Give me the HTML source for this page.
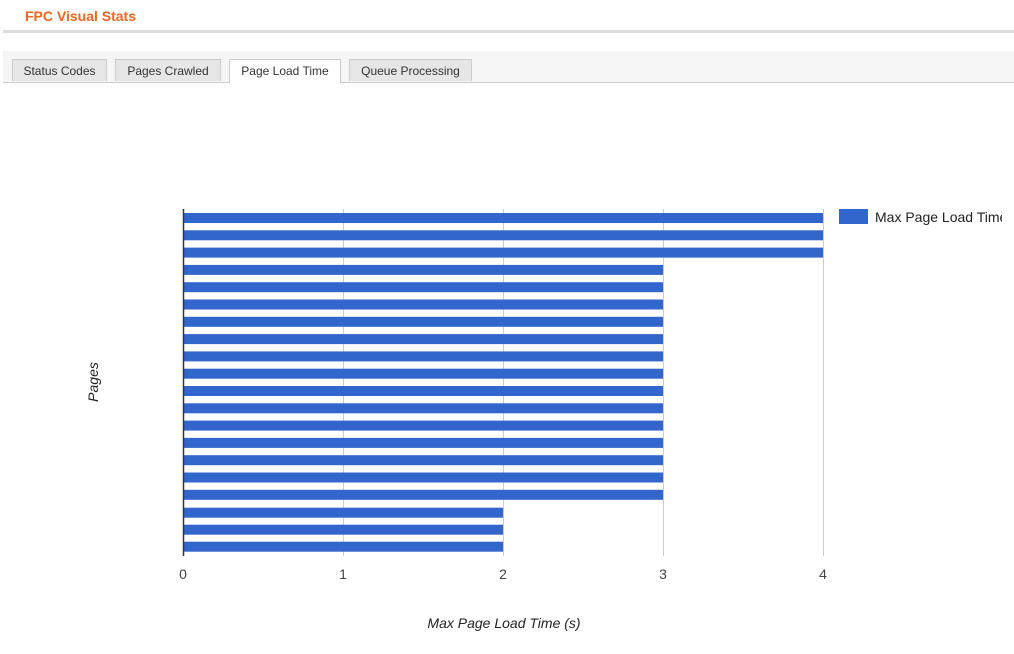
<!DOCTYPE html>
<html><head><style>
body{margin:0;width:1014px;height:654px;background:#fff;font-family:"Liberation Sans",Arial,sans-serif;position:relative;overflow:hidden}
.title{position:absolute;left:25px;top:8px;color:#f0641e;font-weight:bold;font-size:14px}
.rule{position:absolute;left:3px;top:30px;width:1011px;height:3px;background:#ddd}
.tabbar{position:absolute;left:3px;top:51px;width:1011px;height:31px;background:#f5f5f5;border-bottom:1px solid #ccc}
.tab{position:absolute;top:8px;height:22px;border:1px solid #ccc;border-bottom:none;background:#e6e6e6;font-size:12px;color:#333;text-align:center;line-height:22px;box-sizing:border-box}
.tab.a{background:#fff;height:24px}
</style></head><body>
<div class="title">FPC Visual Stats</div>
<div class="rule"></div>
<div class="tabbar">
<div class="tab" style="left:9px;width:95px">Status Codes</div>
<div class="tab" style="left:112px;width:106px">Pages Crawled</div>
<div class="tab a" style="left:226px;width:112px">Page Load Time</div>
<div class="tab" style="left:346px;width:123px">Queue Processing</div>
</div>
<svg width="1014" height="654" style="position:absolute;left:0;top:0" font-family="Liberation Sans,Arial,sans-serif">
<g stroke="#ccc" stroke-width="1">
<line x1="343.5" y1="209" x2="343.5" y2="556"/>
<line x1="503.5" y1="209" x2="503.5" y2="556"/>
<line x1="663.5" y1="209" x2="663.5" y2="556"/>
<line x1="823.5" y1="209" x2="823.5" y2="556"/>
</g>
<g fill="#3366cc">
<rect x="184" y="213" width="639" height="10"/>
<rect x="184" y="230.3" width="639" height="10"/>
<rect x="184" y="247.6" width="639" height="10"/>
<rect x="184" y="264.9" width="479" height="10"/>
<rect x="184" y="282.2" width="479" height="10"/>
<rect x="184" y="299.5" width="479" height="10"/>
<rect x="184" y="316.8" width="479" height="10"/>
<rect x="184" y="334.1" width="479" height="10"/>
<rect x="184" y="351.4" width="479" height="10"/>
<rect x="184" y="368.7" width="479" height="10"/>
<rect x="184" y="386" width="479" height="10"/>
<rect x="184" y="403.3" width="479" height="10"/>
<rect x="184" y="420.6" width="479" height="10"/>
<rect x="184" y="437.9" width="479" height="10"/>
<rect x="184" y="455.2" width="479" height="10"/>
<rect x="184" y="472.5" width="479" height="10"/>
<rect x="184" y="489.8" width="479" height="10"/>
<rect x="184" y="507.7" width="319" height="10"/>
<rect x="184" y="524.7" width="319" height="10"/>
<rect x="184" y="541.7" width="319" height="10"/>
<rect x="839" y="209" width="29" height="15"/>
</g>
<line x1="183.5" y1="209" x2="183.5" y2="556" stroke="#333" stroke-width="1.5"/>
<g font-size="14" fill="#444" text-anchor="middle">
<text x="183" y="579">0</text><text x="343" y="579">1</text><text x="503" y="579">2</text><text x="663" y="579">3</text><text x="823" y="579">4</text>
</g>
<text x="504" y="628" font-size="14" font-style="italic" fill="#222" text-anchor="middle">Max Page Load Time (s)</text>
<text transform="translate(98,382) rotate(-90)" font-size="14" font-style="italic" fill="#222" text-anchor="middle">Pages</text>
<svg x="0" y="0" width="1002" height="654"><text x="875" y="222" font-size="14" fill="#222">Max Page Load Time (s)</text></svg>
</svg>
</body></html>
